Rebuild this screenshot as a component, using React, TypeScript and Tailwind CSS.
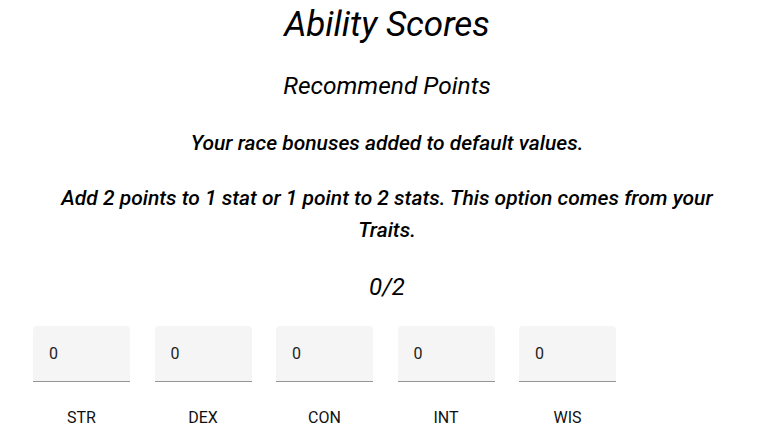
import React, { useState } from 'react';

const STATS = ['STR', 'DEX', 'CON', 'INT', 'WIS'];

export default function App() {
  const [values, setValues] = useState<Record<string, string>>(
    Object.fromEntries(STATS.map((s) => [s, '0']))
  );

  return (
    <div className="w-[774px] pt-[2px] text-black font-['Roboto',sans-serif]">
      <h1 className="text-center italic text-[35px] leading-[46px]">Ability Scores</h1>
      <h2 className="text-center italic text-[24.5px] leading-[32px] mt-[22px]">Recommend Points</h2>
      <p className="text-center italic font-medium text-[21px] leading-[32px] mt-[25px]">
        Your race bonuses added to default values.
      </p>
      <p className="text-center italic font-medium text-[21px] leading-[32px] mt-[23px] px-[50px]">
        Add 2 points to 1 stat or 1 point to 2 stats. This option comes from your Traits.
      </p>
      <p className="text-center italic text-[24px] leading-[32px] mt-[25px]">0/2</p>

      <div className="flex gap-x-[24.5px] ml-[33px] mt-[23px]">
        {STATS.map((s) => (
          <div key={s} className="w-[97px] flex flex-col items-center">
            <input
              value={values[s]}
              onChange={(e) => setValues((p) => ({ ...p, [s]: e.target.value }))}
              className="w-full h-[56px] px-[16px] bg-[#f5f5f5] rounded-t-[4px] border-b border-[#949494] text-[16px] text-[#222] outline-none"
            />
            <span className="mt-[24px] text-[16px] leading-[24px] text-[#111]">{s}</span>
          </div>
        ))}
      </div>
    </div>
  );
}
